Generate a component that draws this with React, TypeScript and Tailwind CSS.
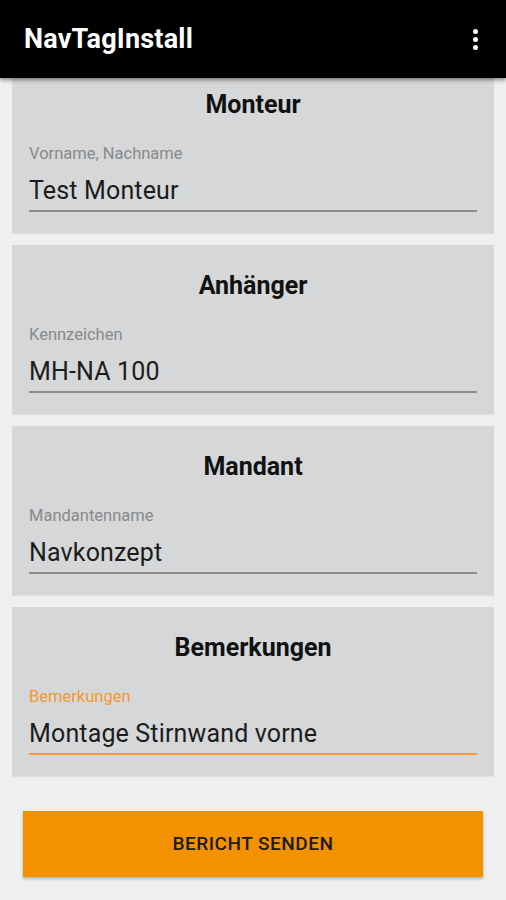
import React from "react";

const cards = [
  { title: "Monteur", label: "Vorname, Nachname", value: "Test Monteur", active: false },
  { title: "Anhänger", label: "Kennzeichen", value: "MH-NA 100", active: false },
  { title: "Mandant", label: "Mandantenname", value: "Navkonzept", active: false },
  { title: "Bemerkungen", label: "Bemerkungen", value: "Montage Stirnwand vorne", active: true },
];

export default function App() {
  return (
    <div
      className="w-[506px] h-[900px] overflow-hidden bg-[#eeefef] flex flex-col"
      style={{ fontFamily: "Roboto, 'Liberation Sans', sans-serif" }}
    >
      <div className="relative z-10 h-[78px] shrink-0 bg-black flex items-center justify-between pl-[24px] pr-[28px] shadow-[0_2px_4px_rgba(0,0,0,0.45)]">
        <span className="text-white text-[27px] font-bold tracking-[0.2px]">NavTagInstall</span>
        <div className="flex flex-col gap-[3px] items-center">
          <span className="w-[5px] h-[5px] rounded-full bg-white" />
          <span className="w-[5px] h-[5px] rounded-full bg-white" />
          <span className="w-[5px] h-[5px] rounded-full bg-white" />
        </div>
      </div>
      <div className="-mt-[14px] flex flex-col gap-[12px] px-[12px]">
        {cards.map((c) => (
          <div key={c.title} className="bg-[#d5d7d8] h-[169px] px-[17px] pt-[29px] flex flex-col shadow-[0_1px_1px_rgba(0,0,0,0.06)]">
            <div className="text-center text-[25px] leading-[24px] font-bold text-[#111]">{c.title}</div>
            <div
              className={`mt-[28px] text-[16.5px] leading-[18px] ${c.active ? "text-[#f39a2e]" : "text-[#888a8b]"}`}
            >
              {c.label}
            </div>
            <div className="mt-[14px] text-[25px] leading-[28px] text-[#1c1c1c] tracking-[0.15px]">{c.value}</div>
            <div className={`mt-[5px] h-[2px] ${c.active ? "bg-[#f39a3a]" : "bg-[#8a8c8d]"}`} />
          </div>
        ))}
      </div>
      <div className="mt-[35px] mx-[23px] h-[66px] bg-[#f39200] flex items-center justify-center shadow-[0_2px_3px_rgba(0,0,0,0.25)]">
        <span className="text-[19px] font-medium text-[#1a1a1a] tracking-[0.5px]">BERICHT SENDEN</span>
      </div>
    </div>
  );
}
